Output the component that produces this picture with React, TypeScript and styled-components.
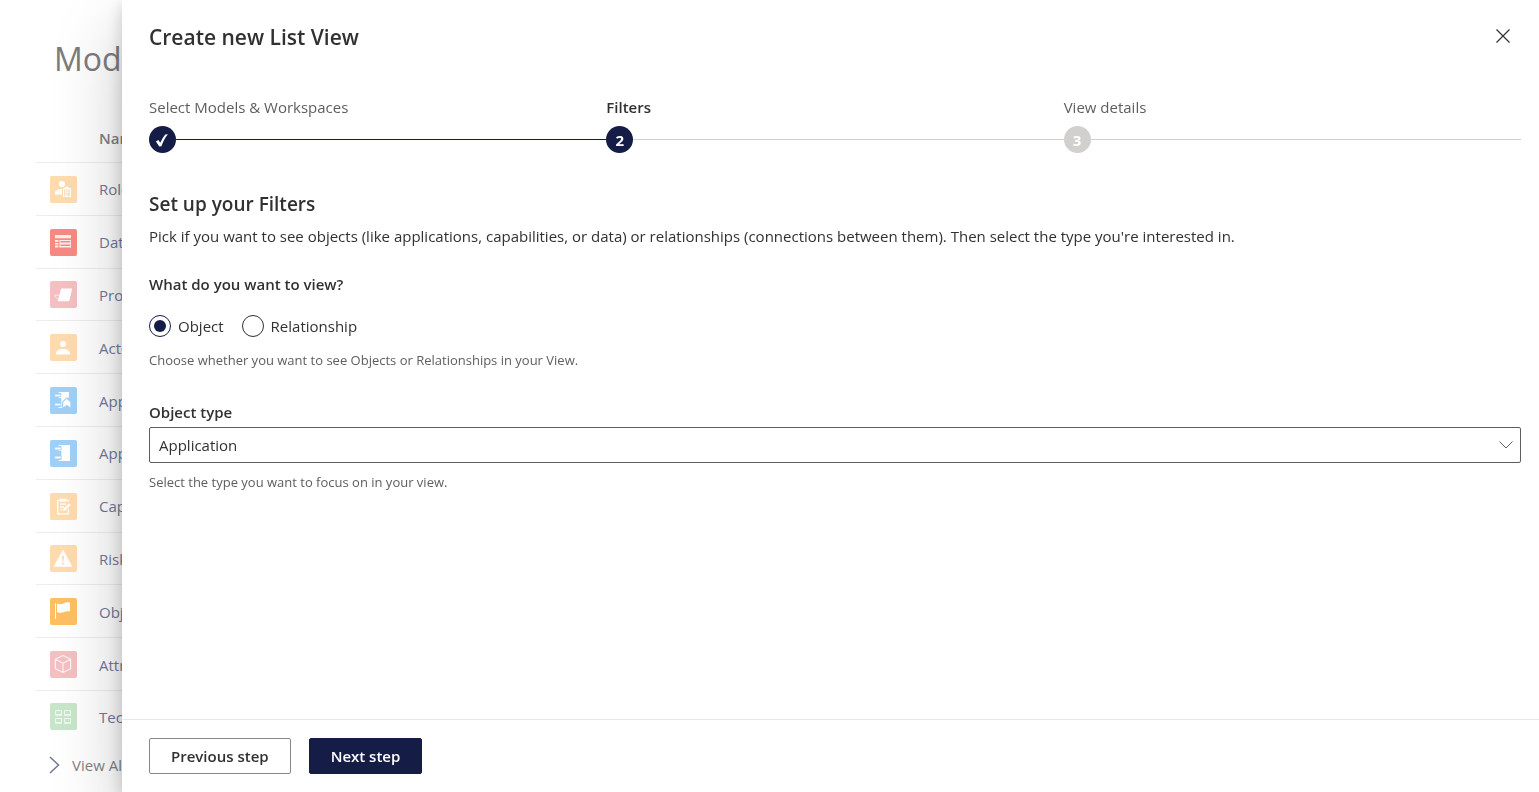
import React, { useState } from "react";
import styled, { createGlobalStyle } from "styled-components";

const navy = "#151d47";
const ink = "#323130";
const muted = "#605e5c";

const GlobalStyle = createGlobalStyle`
  *, *::before, *::after { box-sizing: border-box; }
  body {
    margin: 0;
    background: #fff;
    color: ${ink};
    font-family: "Open Sans", "Noto Sans", sans-serif;
    font-size: 15px;
    line-height: 20px;
  }
  h1, h2, p, fieldset, legend { margin: 0; padding: 0; border: 0; }
  button, select, input { font: inherit; color: inherit; }
`;

const Page = styled.main`
  height: 100vh;
  overflow: hidden;
  padding: 37px 36px 0;
`;

const PageTitle = styled.h1`
  padding-left: 18px;
  font-size: 32px;
  line-height: 44px;
  font-weight: 500;
  color: #7c7c7e;
`;

const ModelTable = styled.table`
  width: 100%;
  height: 627px;
  margin-top: 34px;
  border-spacing: 0;
  table-layout: fixed;
`;

const HeadCell = styled.th<{ $narrow?: boolean }>`
  width: ${(p) => (p.$narrow ? "63px" : "auto")};
  height: 48px;
  padding: 0 0 2px;
  text-align: left;
  font-weight: 600;
  color: #828284;
  border-bottom: 1px solid #ededed;
`;

const Cell = styled.td`
  padding: 1px 0 0;
  vertical-align: middle;
  border-bottom: 1px solid #ededed;
  tr:last-child > & { border-bottom: 0; }
`;

const RowLink = styled.a`
  color: #74789a;
  text-decoration: none;
`;

const Tile = styled.svg<{ $color: string }>`
  display: block;
  width: 27px;
  height: 27px;
  margin-left: 14px;
  border-radius: 2px;
  background: ${(p) => p.$color};
`;

const ViewAll = styled.a`
  display: flex;
  align-items: center;
  gap: 12px;
  margin-top: 13px;
  padding-left: 13px;
  color: #828284;
  text-decoration: none;
`;

const Panel = styled.section`
  position: fixed;
  inset: 0 0 0 122px;
  display: flex;
  flex-direction: column;
  background: #fff;
  box-shadow: 0 29px 65px rgba(0, 0, 0, 0.22), 0 5px 16px rgba(0, 0, 0, 0.18);
`;

const PanelHeader = styled.header`
  display: flex;
  align-items: flex-start;
  justify-content: space-between;
  padding: 18px 18px 0 27px;
`;

const PanelTitle = styled.h1`
  font-size: 21px;
  line-height: 38px;
  font-weight: 600;
`;

const CloseButton = styled.button`
  display: grid;
  place-items: center;
  width: 36px;
  height: 36px;
  padding: 0;
  border: 0;
  background: none;
  cursor: pointer;
`;

const PanelBody = styled.div`
  flex: 1;
  min-height: 0;
  overflow: auto;
  padding: 41px 18px 0 27px;
`;

const Steps = styled.ol`
  display: grid;
  grid-template-columns: repeat(3, 1fr);
  margin: 0;
  padding: 0;
  list-style: none;
`;

const StepLabel = styled.div<{ $current?: boolean }>`
  margin-bottom: 9px;
  font-weight: ${(p) => (p.$current ? 600 : 400)};
  color: ${(p) => (p.$current ? ink : muted)};
`;

const StepTrack = styled.div<{ $done?: boolean }>`
  display: flex;
  align-items: center;
  &::after {
    content: "";
    flex: 1;
    height: 1px;
    background: ${(p) => (p.$done ? navy : "#d0d0d0")};
  }
`;

const StepDot = styled.span<{ $active?: boolean }>`
  display: grid;
  place-items: center;
  width: 27px;
  height: 27px;
  border-radius: 50%;
  background: ${(p) => (p.$active ? navy : "#d2d0ce")};
  color: #fff;
  font-weight: 700;
`;

const SectionTitle = styled.h2`
  margin-top: 37px;
  font-size: 19px;
  line-height: 28px;
  font-weight: 600;
`;

const Description = styled.p`
  margin-top: 8px;
`;

const FieldSet = styled.fieldset`
  margin-top: 28px;
`;

const Legend = styled.legend`
  font-weight: 600;
`;

const Options = styled.div`
  display: flex;
  gap: 18px;
  margin: 21px 0 14px;
`;

const Option = styled.label`
  display: flex;
  align-items: center;
  gap: 7px;
  cursor: pointer;
`;

const Radio = styled.input`
  appearance: none;
  display: grid;
  place-items: center;
  width: 22px;
  height: 22px;
  margin: 0;
  border: 1px solid ${ink};
  border-radius: 50%;
  &:checked { border-color: ${navy}; }
  &:checked::before {
    content: "";
    width: 12px;
    height: 12px;
    border-radius: 50%;
    background: ${navy};
  }
`;

const Hint = styled.p`
  font-size: 13px;
  line-height: 18px;
  color: ${muted};
`;

const Field = styled.div`
  margin-top: 33px;
`;

const FieldLabel = styled.label`
  display: block;
  margin-bottom: 5px;
  font-weight: 600;
`;

const SelectBox = styled.div`
  display: grid;
  align-items: center;
  margin-bottom: 10px;
  & > * { grid-area: 1 / 1; }
  & > svg {
    justify-self: end;
    margin-right: 8px;
    pointer-events: none;
  }
`;

const Select = styled.select`
  appearance: none;
  width: 100%;
  height: 36px;
  padding: 0 32px 0 9px;
  border: 1px solid ${muted};
  border-radius: 2px;
  background: #fff;
`;

const PanelFooter = styled.footer`
  display: flex;
  gap: 18px;
  padding: 18px 27px;
  border-top: 1px solid #e8e8e8;
`;

const Button = styled.button<{ $primary?: boolean }>`
  height: 36px;
  padding: 0 21px;
  border: 1px solid ${(p) => (p.$primary ? navy : "#8a8886")};
  border-radius: 2px;
  background: ${(p) => (p.$primary ? navy : "#fff")};
  color: ${(p) => (p.$primary ? "#fff" : ink)};
  font-weight: 600;
  cursor: pointer;
`;

const orange = "#ffdcb0";
const blue = "#a0d0f8";
const pink = "#f4c0c2";

const rows = [
  {
    name: "Role",
    color: orange,
    art: (
      <g fill="#fff">
        <circle cx="12" cy="8" r="3.1" />
        <path d="M5 18.5v-1.8c0-2 3-3.6 7-3.6v5.4z" />
        <path fillRule="evenodd" d="M13 12h2.3v-1.2h3.4V12H21v9h-8zM14.2 13.4v6.4h5.6v-6.4z" />
        <path d="M15 14.4h4v1h-4zm0 1.9h4v1h-4zm0 1.9h3v1h-3z" />
      </g>
    ),
  },
  {
    name: "Data",
    color: "#f78b84",
    art: (
      <g fill="#fff" opacity=".85">
        <path d="M5 6h16v3.2H5zM5 11h3.4v2H5zM5 14h3.400v1.500H5zM5 16.600h3.400v2H5z" />
        <path d="M10 11h11v1h-11zM10 13.600h11v1.800h-11zM10 17h11v1.600h-11z" />
        <path d="M9.400 11h1v7.600h-1zM20.200 11h.8v7.600h-.8z" />
      </g>
    ),
  },
  {
    name: "Project",
    color: pink,
    art: (
      <g>
        <path d="M11.2 7.6h11l-3 12.600H7.600z" fill="#fff" />
        <path d="M9 14.200H4.600l2.600 4" fill="none" stroke="#fff" strokeWidth=".8" opacity=".8" />
      </g>
    ),
  },
  {
    name: "Actor",
    color: orange,
    art: (
      <g fill="#fff">
        <circle cx="13" cy="10" r="3" />
        <path d="M6.2 20.4v-1.6c0-2.2 3-3.8 6.8-3.8s6.8 1.6 6.8 3.8v1.6z" />
      </g>
    ),
  },
  {
    name: "App role",
    color: blue,
    art: (
      <g fill="#fff">
        <path d="M8.600 5H19v6l-2.200-.8-5 4.800V21H8.600v-1h2.600v-9H8.600v-.8h2.600V6H8.600z" />
        <path d="M4.800 7.400h6v2.200h-6zM4.800 16.400h6v2.200h-6z" stroke={blue} strokeWidth=".5" />
        <path d="M12.800 15.200l4-3.700 4 3.700v5.8l-4-2.800-4 2.800z" stroke={blue} strokeWidth=".7" />
      </g>
    ),
  },
  {
    name: "Application",
    color: blue,
    art: (
      <g fill="#fff">
        <path d="M8.600 5H20v16H8.600v-1h2.800v-9H8.600v-.8h2.800V6H8.600z" />
        <path d="M4.800 7.200h6.200v2.600H4.800zM4.800 16.200h6.200v2.600H4.800z" stroke={blue} strokeWidth=".6" />
      </g>
    ),
  },
  {
    name: "Capability",
    color: orange,
    art: (
      <g fill="none" stroke="#fff" strokeWidth="1.3">
        <path d="M18.4 16v4.8H7.7V7.4h10.700v1.4" />
        <path d="M10.6 8V6.4h5V8z" fill="#fff" />
        <path d="M10 11.2h6M10 14h4M10 16.8h2" />
        <path d="M13.2 17.8l.5-2.2 5.3-5 1.5 1.5-5.2 5.100z" fill="#fff" strokeWidth=".5" />
      </g>
    ),
  },
  {
    name: "Risk",
    color: orange,
    art: (
      <g>
        <path d="M13 5l9 16.600H4z" fill="#fff" stroke="#fff" strokeWidth=".6" strokeLinejoin="round" />
        <path d="M12 11h2l-.4 5.300h-1.200z" fill={orange} />
        <circle cx="13" cy="18.600" r="1.100" fill={orange} />
      </g>
    ),
  },
  {
    name: "Objective",
    color: "#ffc064",
    art: (
      <g fill="#fff">
        <path d="M5 5h1v16H5z" />
        <path d="M7 5.400c3 1.400 5 1 7-.2 2-1.200 3.600-1.200 6-.7v9c-2.400-.6-4-.4-6 .5-2 1-4 1.200-7 0z" />
      </g>
    ),
  },
  {
    name: "Attribute",
    color: pink,
    art: (
      <path
        d="M13 4.500l7.600 3.800v9.400L13 21.500l-7.600-3.800V8.300zM5.400 8.300L13 12.200l7.600-3.900M13 12.200v9.300"
        fill="none"
        stroke="#fff"
        strokeWidth="1.200"
        strokeLinejoin="round"
        opacity=".8"
      />
    ),
  },
  {
    name: "Technology",
    color: "#c8e6c9",
    art: (
      <g fill="none" stroke="#fff" strokeWidth=".9" opacity=".8">
        <path d="M5.500 7.500h6v4h-6zM14.500 7.500h6v4h-6zM5.500 15.500h6v4h-6zM14.500 15.500h6v4h-6z" />
        <path d="M5 12.400h7M14 12.400h7M5 20.400h7M14 20.400h7" />
      </g>
    ),
  },
];

export default function App() {
  const [view, setView] = useState("object");

  return (
    <>
      <GlobalStyle />
      <Page>
        <PageTitle>Models</PageTitle>
        <ModelTable>
          <thead>
            <tr>
              <HeadCell $narrow aria-label="Icon" />
              <HeadCell>Name</HeadCell>
            </tr>
          </thead>
          <tbody>
            {rows.map((row) => (
              <tr key={row.name}>
                <Cell>
                  <Tile viewBox="0 0 27 27" $color={row.color} aria-hidden="true">
                    {row.art}
                  </Tile>
                </Cell>
                <Cell>
                  <RowLink href="#">{row.name}</RowLink>
                </Cell>
              </tr>
            ))}
          </tbody>
        </ModelTable>
        <ViewAll href="#">
          <svg width="11" height="18" viewBox="0 0 11 18" fill="none" stroke="#74789a" strokeWidth="1.500" aria-hidden="true">
            <path d="M1 1l8.500 8L1 17" />
          </svg>
          View All
        </ViewAll>
      </Page>

      <Panel role="dialog" aria-labelledby="panel-title">
        <PanelHeader>
          <PanelTitle id="panel-title">Create new List View</PanelTitle>
          <CloseButton type="button" aria-label="Close">
            <svg width="14" height="14" viewBox="0 0 14 14" stroke={ink} strokeWidth="1.200" aria-hidden="true">
              <path d="M.5.5l13 13M13.500.5l-13 13" />
            </svg>
          </CloseButton>
        </PanelHeader>

        <PanelBody>
          <Steps>
            <li>
              <StepLabel>Select Models &amp; Workspaces</StepLabel>
              <StepTrack $done>
                <StepDot $active>
                  <svg width="27" height="27" viewBox="0 0 27 27" fill="#fff" aria-hidden="true">
                    <path d="M6.900 15.400l2.500-1.400 1.800 2.800c1.400-3 3-5.900 5.100-8.400l2.600-.1c-3 3.700-5 7.500-6.400 11.900l-2.200.4z" />
                  </svg>
                </StepDot>
              </StepTrack>
            </li>
            <li aria-current="step">
              <StepLabel $current>Filters</StepLabel>
              <StepTrack>
                <StepDot $active>2</StepDot>
              </StepTrack>
            </li>
            <li>
              <StepLabel>View details</StepLabel>
              <StepTrack>
                <StepDot>3</StepDot>
              </StepTrack>
            </li>
          </Steps>

          <SectionTitle>Set up your Filters</SectionTitle>
          <Description>
            Pick if you want to see objects (like applications, capabilities, or data) or relationships (connections
            between them). Then select the type you're interested in.
          </Description>

          <FieldSet>
            <Legend>What do you want to view?</Legend>
            <Options>
              <Option>
                <Radio type="radio" name="view" checked={view === "object"} onChange={() => setView("object")} />
                Object
              </Option>
              <Option>
                <Radio
                  type="radio"
                  name="view"
                  checked={view === "relationship"}
                  onChange={() => setView("relationship")}
                />
                Relationship
              </Option>
            </Options>
            <Hint>Choose whether you want to see Objects or Relationships in your View.</Hint>
          </FieldSet>

          <Field>
            <FieldLabel htmlFor="object-type">Object type</FieldLabel>
            <SelectBox>
              <Select id="object-type" defaultValue="Application">
                <option>Application</option>
                <option>Capability</option>
                <option>Data</option>
              </Select>
              <svg width="14" height="8" viewBox="0 0 14 8" fill="none" stroke={muted} aria-hidden="true">
                <path d="M.5.500L7 7 13.500.5" />
              </svg>
            </SelectBox>
            <Hint>Select the type you want to focus on in your view.</Hint>
          </Field>
        </PanelBody>

        <PanelFooter>
          <Button type="button">Previous step</Button>
          <Button type="button" $primary>
            Next step
          </Button>
        </PanelFooter>
      </Panel>
    </>
  );
}
